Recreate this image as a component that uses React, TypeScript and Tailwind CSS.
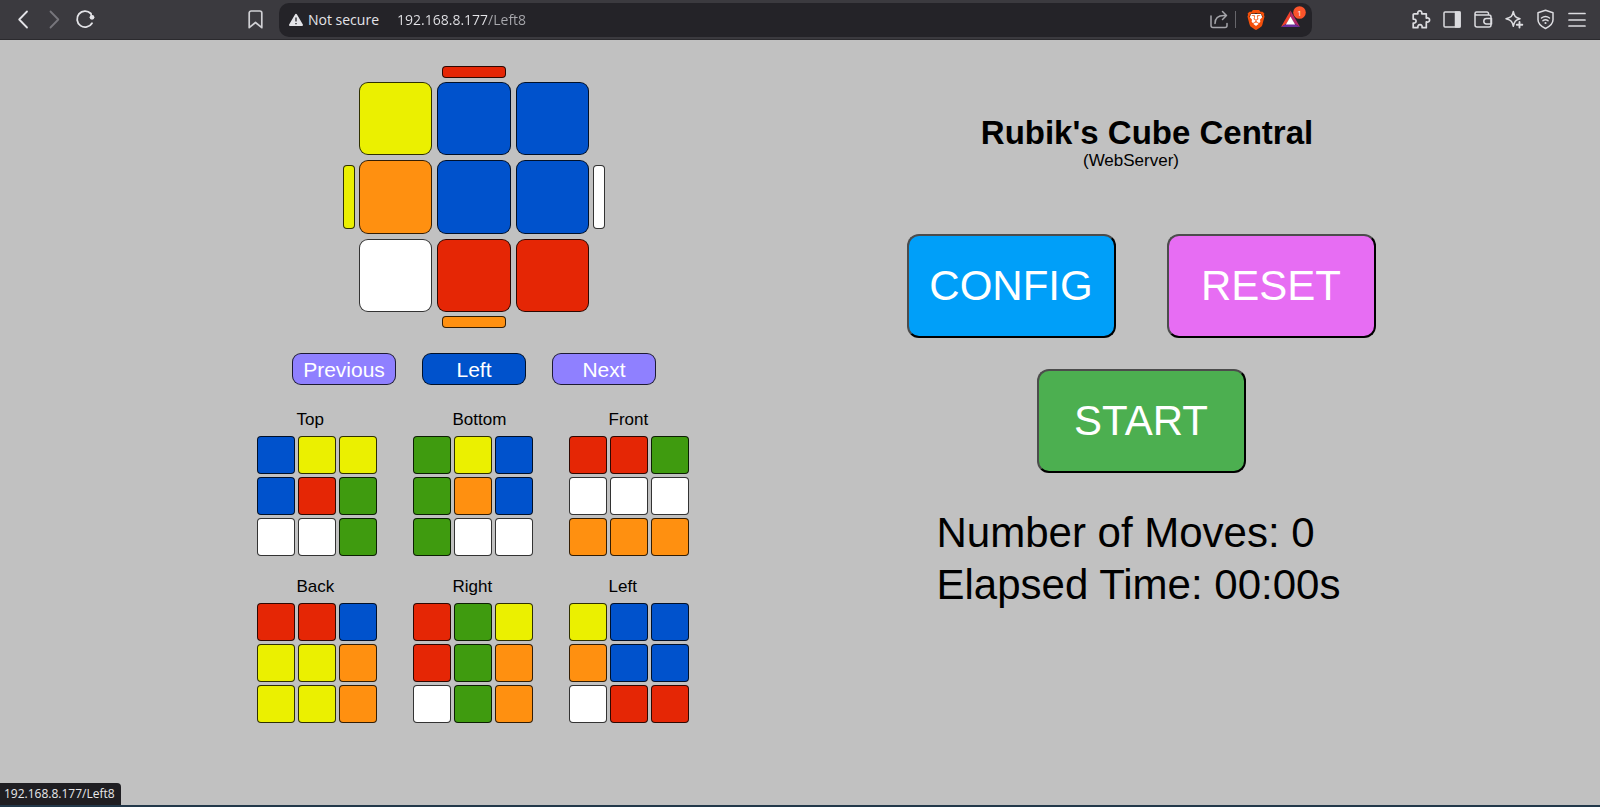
import type { ReactNode } from "react";
import { SiBrave } from "react-icons/si";

type Sticker = "R" | "G" | "B" | "Y" | "O" | "W";

const stickerClass: Record<Sticker, string> = {
  R: "bg-[#e52605]",
  G: "bg-[#3f9b0f]",
  B: "bg-[#0052cc]",
  Y: "bg-[#ebf000]",
  O: "bg-[#ff9010]",
  W: "bg-white",
};

const faces: { name: string; stickers: string }[] = [
  { name: "Top", stickers: "BYYBRGWWG" },
  { name: "Bottom", stickers: "GYBGOBGWW" },
  { name: "Front", stickers: "RRGWWWOOO" },
  { name: "Back", stickers: "RRBYYOYYO" },
  { name: "Right", stickers: "RGYRGOWGO" },
  { name: "Left", stickers: "YBBOBBWRR" },
];

const currentFace = "YBBOBBWRR";

function Stickers({ value, className }: { value: string; className: string }) {
  return (
    <>
      {[...value].map((s, i) => (
        <div key={i} className={`border border-black/80 ${className} ${stickerClass[s as Sticker]}`} />
      ))}
    </>
  );
}

function IconButton({ label, children }: { label: string; children: ReactNode }) {
  return (
    <button type="button" aria-label={label} className="size-5 shrink-0">
      <svg
        viewBox="0 0 20 20"
        className="size-5 overflow-visible"
        fill="none"
        stroke="currentColor"
        strokeWidth="1.5"
        strokeLinecap="round"
        strokeLinejoin="round"
      >
        {children}
      </svg>
    </button>
  );
}

function BrowserBar() {
  return (
    <header className="flex h-10 shrink-0 items-center border-b border-[#2b2a2e] bg-[#3b3a3f] pr-[14px] pl-[13px] font-['Open_Sans','Noto_Sans',sans-serif] text-[#e4e4e8]">
      <nav className="flex gap-[11px]" aria-label="History">
        <IconButton label="Back">
          <path d="M14 1.500 6.200 9.500l7.800 8" strokeWidth="1.800" />
        </IconButton>
        <span className="flex text-[#77767c]">
          <IconButton label="Forward">
            <path d="m6.500 1.500 7.800 8-7.800 8" strokeWidth="1.800" />
          </IconButton>
        </span>
        <IconButton label="Reload">
          <path d="M17 13.200A8 8 0 1 1 15.800 3.500" strokeWidth="1.800" />
          <circle cx="17" cy="7.300" r="2.400" fill="currentColor" stroke="none" />
          <path d="M15.800 3.500l1.200 3.500" />
        </IconButton>
      </nav>
      <div className="ml-[151px] flex text-[#d0d0d4]">
        <IconButton label="Bookmark this page">
          <path
            d="M5.200 1h8.600a2 2 0 0 1 2 2v14.700l-6.300-5.200-6.300 5.200V3a2 2 0 0 1 2-2z"
            strokeWidth="1.700"
          />
        </IconButton>
      </div>
      <div className="mr-[99px] ml-[13px] flex h-[34px] flex-1 items-center rounded-[10px] bg-[#242328] pr-1 pl-[9px]">
        <svg viewBox="0 0 16 16" className="size-4 shrink-0" aria-hidden="true">
          <path d="M8 2.800 14 13H2z" fill="#e4e4e8" stroke="#e4e4e8" strokeWidth="2" strokeLinejoin="round" />
          <path d="M8 5.500v4M8 11v1.300" stroke="#242328" strokeWidth="1.300" />
        </svg>
        <label htmlFor="address" className="ml-1 text-sm leading-5 whitespace-nowrap">
          Not secure
        </label>
        <input
          id="address"
          type="text"
          defaultValue="192.168.8.177/Left8"
          className="ml-[18px] min-w-0 flex-1 bg-[linear-gradient(90deg,#e4e4e8_90px,#a9a9ae_90px)] bg-clip-text text-sm leading-5 text-transparent outline-none"
        />
        <span className="flex text-[#a5a5aa]">
          <IconButton label="Share">
            <path d="M2 6v9.500a2 2 0 0 0 2 2h12a2 2 0 0 0 2-2V13.500" />
            <path d="M6 13.500c0-5 3-8 9-8h2.500M13.500 1.500l4 4-4 4" />
          </IconButton>
        </span>
        <span className="ml-[6px] h-[17px] w-px bg-[#67666b]" />
        <button type="button" aria-label="Brave Shields" className="ml-[10px] grid size-5 shrink-0 place-items-center">
          <svg viewBox="0 0 20 20" className="col-start-1 row-start-1 size-5" aria-hidden="true">
            <path d="M5 4h10l1.500 4-2 6L10 17.500 5.500 14l-2-6z" fill="#fff" />
          </svg>
          <SiBrave className="col-start-1 row-start-1 size-5 text-[#f4500b]" />
        </button>
        <button type="button" aria-label="Brave Rewards" className="ml-[14px] h-6 w-7 shrink-0">
          <svg viewBox="0 0 28 24" className="h-6 w-7 overflow-visible">
            <path d="M10.500 2.500 1 19l5.500-3.300 4-7z" fill="#f0412c" />
            <path d="M10.500 2.500 20 19l-5.500-3.300-4-7z" fill="#b52a6a" />
            <path d="M1 19h19l-5.500-3.300h-8z" fill="#6b2f9c" />
            <path d="m10.500 8.500 4.600 8H5.900z" fill="#fff" />
            <circle cx="19.500" cy="4.500" r="6.300" fill="#fb542b" />
            <text x="19.500" y="7.500" textAnchor="middle" fontSize="8" fill="#fff">
              1
            </text>
          </svg>
        </button>
      </div>
      <nav className="flex gap-[11px] text-[#dcdce0]" aria-label="Browser tools">
        <IconButton label="Extensions">
          <path
            d="M3.200 3.800h3.700c-.5-1.800.5-3 1.900-3s2.400 1.200 1.900 3h4.600v4.300c1.900-.5 3.300.4 3.300 1.900s-1.400 2.400-3.300 1.900v5.800h-4.200c.3-1.900-.5-3-2.100-3s-2.400 1.100-2.100 3H2.200v-4.700c1.800.3 2.900-.5 2.900-2S4 8.900 2.200 9.200V4.800a1 1 0 0 1 1-1z"
            strokeWidth="1.700"
          />
        </IconButton>
        <IconButton label="Sidebar">
          <rect x="2" y="2" width="16" height="15" rx="1" />
          <path d="M13.500 2H18v15h-4.500z" fill="currentColor" />
        </IconButton>
        <IconButton label="Wallet">
          <path d="M15.500 5V3.500A1.500 1.500 0 0 0 14 2H3.500A1.500 1.500 0 0 0 2 3.500V15a2 2 0 0 0 2 2h12a2 2 0 0 0 2-2V7a2 2 0 0 0-2-2H3.500A1.500 1.500 0 0 1 2 3.500" />
          <path d="M18.500 8.500h-5a2.700 2.700 0 0 0 0 5.400h5z" />
        </IconButton>
        <IconButton label="Assistant">
          <path d="M9.300 1.500c1 4.800 2 6 6.700 7.200-2.300.7-3.700 1.300-4.700 2.600-.9 1.200-1.400 2.700-2 5-1-4.900-2-6.300-7.300-7.600 5.200-1.200 6.300-2.400 7.300-7.200z" />
          <path d="M15.500 12v5.500M12.800 14.800h5.500" strokeWidth="1.900" />
        </IconButton>
        <IconButton label="VPN">
          <path d="m10.500.2 7.500 2.600v7c0 4.200-3.200 6.700-7.500 8.700C6.200 16.500 3 14 3 9.800v-7z" />
          <path d="M6.500 8c2.500-2 5.500-2 8 0M8 10.700c1.600-1.200 3.400-1.200 5 0" />
          <circle cx="10.500" cy="13" r="1.100" fill="currentColor" stroke="none" />
        </IconButton>
        <IconButton label="Menu">
          <path d="M3 3.500h16M3 10h16M3 16h16" strokeWidth="1.700" />
        </IconButton>
      </nav>
    </header>
  );
}

function CurrentFace() {
  return (
    <div className="grid grid-cols-[12px_230px_12px] place-items-center gap-1">
      <div className={`col-start-2 h-3 w-16 rounded border border-black/80 ${stickerClass.R}`} />
      <div className={`col-start-1 h-16 w-3 rounded border border-black/80 ${stickerClass.Y}`} />
      <div className="grid h-[230px] w-full grid-cols-3 grid-rows-3 gap-[5px]">
        <Stickers value={currentFace} className="rounded-[9px]" />
      </div>
      <div className={`h-16 w-3 rounded border border-black/80 ${stickerClass.W}`} />
      <div className={`col-start-2 h-3 w-16 rounded border border-black/80 ${stickerClass.O}`} />
    </div>
  );
}

const faceButton =
  "h-8 w-[104px] rounded-[9px] border border-black/80 text-center text-[21px] leading-none text-white";

const actionButton =
  "h-[104px] w-[209px] rounded-xl border-2 border-t-[#4c4c4c] border-r-black border-b-black border-l-[#4c4c4c] text-center text-[42px] leading-none text-white";

export default function App() {
  return (
    <div className="flex min-h-screen flex-col bg-[#c1c1c1] font-['Liberation_Sans',Arial,sans-serif] text-black">
      <BrowserBar />
      <main className="flex flex-1 items-start justify-center gap-[218px] pl-8">
        <section className="w-[432px] pt-[26px]" aria-label="Cube">
          <div className="flex flex-col items-center pl-[3px]">
            <CurrentFace />
            <div className="mt-[25px] flex gap-[26px]">
              <button type="button" className={`${faceButton} bg-[#8f80ff]`}>
                Previous
              </button>
              <button type="button" className={`${faceButton} bg-[#0052cc]`}>
                Left
              </button>
              <button type="button" className={`${faceButton} bg-[#8f80ff]`}>
                Next
              </button>
            </div>
          </div>
          <div className="mt-6 grid grid-cols-3 gap-x-9 gap-y-5">
            {faces.map((face) => (
              <figure key={face.name}>
                <figcaption className="mb-[5px] pl-10 text-[17px] leading-[22px]">{face.name}</figcaption>
                <div className="grid size-[120px] grid-cols-3 gap-[3px]">
                  <Stickers value={face.stickers} className="rounded" />
                </div>
              </figure>
            ))}
          </div>
        </section>
        <section className="flex w-[469px] flex-col pt-[75px]" aria-label="Controls">
          <h1 className="pl-3 text-center text-[33px] leading-9 font-bold">Rubik's Cube Central</h1>
          <p className="pr-5 text-center text-[17px] leading-5">(WebServer)</p>
          <div className="mt-[63px] flex flex-wrap justify-between">
            <button type="button" className={`${actionButton} bg-[#009ff9]`}>
              CONFIG
            </button>
            <button type="button" className={`${actionButton} bg-[#e76df3]`}>
              RESET
            </button>
          </div>
          <button type="button" className={`${actionButton} mt-[31px] self-center bg-[#4caf50]`}>
            START
          </button>
          <div className="mt-[34px] pl-[30px] text-[42px] leading-[52px] whitespace-nowrap">
            <p>Number of Moves: 0</p>
            <p>Elapsed Time: 00:00s</p>
          </div>
        </section>
      </main>
      <footer className="flex border-b-2 border-[#22384a] font-['Open_Sans','Noto_Sans',sans-serif]">
        <span className="rounded-tr bg-[#1f1e22] py-0.5 pr-[6px] pl-1 text-xs leading-[18px] text-[#e8e8ea]">
          192.168.8.177/Left8
        </span>
      </footer>
    </div>
  );
}
